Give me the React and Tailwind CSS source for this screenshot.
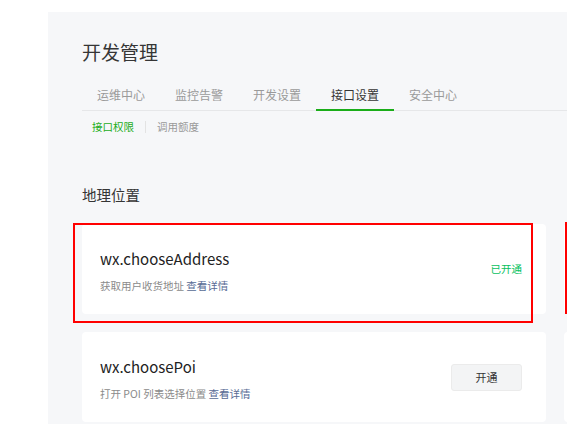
import React from "react";

const font = { fontFamily: '"Noto Sans CJK SC", "Noto Sans", sans-serif' };

function Card({ name, desc, action }) {
  return (
    <div className="relative h-[90px] rounded-[4px] bg-white pl-[18px] pr-[24px] pt-[25px]">
      {name && (
        <div className="flex flex-col">
          <div className="text-[15px] leading-[20px] text-[#222]">{name}</div>
          <div className="mt-[9px] text-[10.5px] leading-[16px] text-[#8a8a8a]">
            {desc} <span className="text-[#576b95]">查看详情</span>
          </div>
        </div>
      )}
      {action && (
        <div className="absolute right-[24px] top-0 flex h-full items-center">{action}</div>
      )}
    </div>
  );
}

export default function App() {
  const tabs = ["运维中心", "监控告警", "开发设置", "接口设置", "安全中心"];
  return (
    <div className="relative h-[424px] w-[567px] overflow-hidden bg-white" style={font}>
      <div className="ml-[48px] mt-[12px] h-[460px] w-[1100px] bg-[#f6f7f9] pl-[34px] pt-[27px]">
        <div className="text-[19px] leading-[26px] text-[#353535]">开发管理</div>
        <div className="mt-[16px] flex border-b border-[#e6e7e9]">
          {tabs.map((t, i) => (
            <div
              key={t}
              className={
                i === 3
                  ? "-mb-px flex h-[30px] w-[78px] items-center justify-center border-b-2 border-[#1aad19] text-[12px] text-[#353535]"
                  : "-mb-px flex h-[30px] w-[78px] items-center justify-center border-b-2 border-transparent text-[12px] text-[#9a9a9a]"
              }
            >
              {t}
            </div>
          ))}
        </div>
        <div className="flex h-[32px] items-center pl-[10px] text-[10.5px]">
          <span className="text-[#1aad19]">接口权限</span>
          <span className="mx-[11px] h-[12px] w-px bg-[#e3e3e3]"></span>
          <span className="text-[#9a9a9a]">调用额度</span>
        </div>
        <div className="mt-[41px] text-[14.5px] leading-[22px] text-[#353535]">地理位置</div>
        <div className="mt-[18px] grid grid-cols-[464px_464px] gap-x-[18px] gap-y-[18px]">
          <Card
            name="wx.chooseAddress"
            desc="获取用户收货地址"
            action={<span className="text-[10.5px] text-[#07c160]">已开通</span>}
          />
          <Card />
          <Card
            name="wx.choosePoi"
            desc="打开 POI 列表选择位置"
            action={
              <button className="flex h-[27px] w-[71px] items-center justify-center rounded-[3px] border border-[#ebebeb] bg-[#f3f4f5] text-[11px] text-[#353535]">
                开通
              </button>
            }
          />
          <Card />
        </div>
      </div>
      <div className="pointer-events-none absolute left-[73px] top-[223px] h-[100px] w-[460px] border-2 border-[#ff0000]"></div>
      <div className="pointer-events-none absolute left-[565px] top-[222px] h-[92px] w-[460px] border-2 border-[#ff0000]"></div>
    </div>
  );
}
